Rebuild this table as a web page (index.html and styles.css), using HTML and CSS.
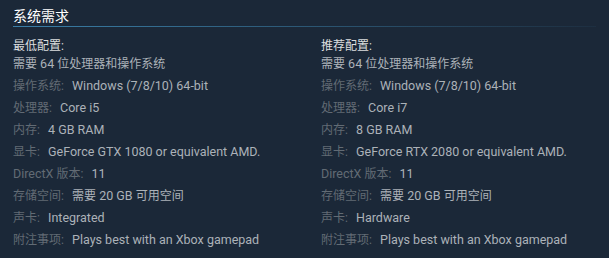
FILE: index.html
```html
<!DOCTYPE html>
<html lang="zh-CN">
<head>
<meta charset="utf-8">
<link rel="stylesheet" href="styles.css">
</head>
<body>
<div class="sysreq">
  <h2 class="title">系统需求</h2>
  <div class="cols">
    <div class="col">
      <div class="heading"><span class="zh">最低配置:</span></div>
      <ul class="list">
        <li><span class="zh">需要</span> 64 <span class="zh">位处理器和操作系统</span></li>
        <li><span class="lbl"><span class="zh">操作系统:</span></span> Windows (7/8/10) 64-bit</li>
        <li><span class="lbl"><span class="zh">处理器:</span></span> Core i5</li>
        <li><span class="lbl"><span class="zh">内存:</span></span> 4 GB RAM</li>
        <li><span class="lbl"><span class="zh">显卡:</span></span> GeForce GTX 1080 or equivalent AMD.</li>
        <li><span class="lbl">DirectX <span class="zh">版本:</span></span> 11</li>
        <li><span class="lbl"><span class="zh">存储空间:</span></span> <span class="zh">需要</span> 20 GB <span class="zh">可用空间</span></li>
        <li><span class="lbl"><span class="zh">声卡:</span></span> Integrated</li>
        <li><span class="lbl"><span class="zh">附注事项:</span></span> Plays best with an Xbox gamepad</li>
      </ul>
    </div>
    <div class="col">
      <div class="heading"><span class="zh">推荐配置:</span></div>
      <ul class="list">
        <li><span class="zh">需要</span> 64 <span class="zh">位处理器和操作系统</span></li>
        <li><span class="lbl"><span class="zh">操作系统:</span></span> Windows (7/8/10) 64-bit</li>
        <li><span class="lbl"><span class="zh">处理器:</span></span> Core i7</li>
        <li><span class="lbl"><span class="zh">内存:</span></span> 8 GB RAM</li>
        <li><span class="lbl"><span class="zh">显卡:</span></span> GeForce RTX 2080 or equivalent AMD.</li>
        <li><span class="lbl">DirectX <span class="zh">版本:</span></span> 11</li>
        <li><span class="lbl"><span class="zh">存储空间:</span></span> <span class="zh">需要</span> 20 GB <span class="zh">可用空间</span></li>
        <li><span class="lbl"><span class="zh">声卡:</span></span> Hardware</li>
        <li><span class="lbl"><span class="zh">附注事项:</span></span> Plays best with an Xbox gamepad</li>
      </ul>
    </div>
  </div>
</div>
</body>
</html>
```
FILE: styles.css
```css
html, body {
  margin: 0;
  padding: 0;
  background: #1b2838;
}
body {
  font-family: Roboto, "Noto Sans CJK SC", sans-serif;
  font-size: 12.5px;
  color: #acb2b8;
}
.zh {
  font-size: 12px;
}
.sysreq {
  padding: 0 13px;
}
.title {
  margin: 0 0 10px 0;
  padding: 6px 0 3px 0;
  font-family: "Noto Sans CJK SC", sans-serif;
  font-size: 14px;
  line-height: 18px;
  font-weight: normal;
  color: #ffffff;
  background-image: linear-gradient(to right, #3a7fa8 0%, rgba(58, 127, 168, 0.45) 60%, rgba(58, 127, 168, 0.08) 100%);
  background-repeat: no-repeat;
  background-size: 100% 1px;
  background-position: left bottom;
}
.cols {
  display: grid;
  grid-template-columns: 308px 1fr;
}
.heading {
  line-height: 18px;
  color: #dcdedf;
}
.list {
  list-style: none;
  margin: 0;
  padding: 0;
}
.list li {
  line-height: 18px;
  margin-bottom: 4px;
  white-space: nowrap;
}
.lbl {
  color: #626b74;
  padding-right: 5px;
}
```
